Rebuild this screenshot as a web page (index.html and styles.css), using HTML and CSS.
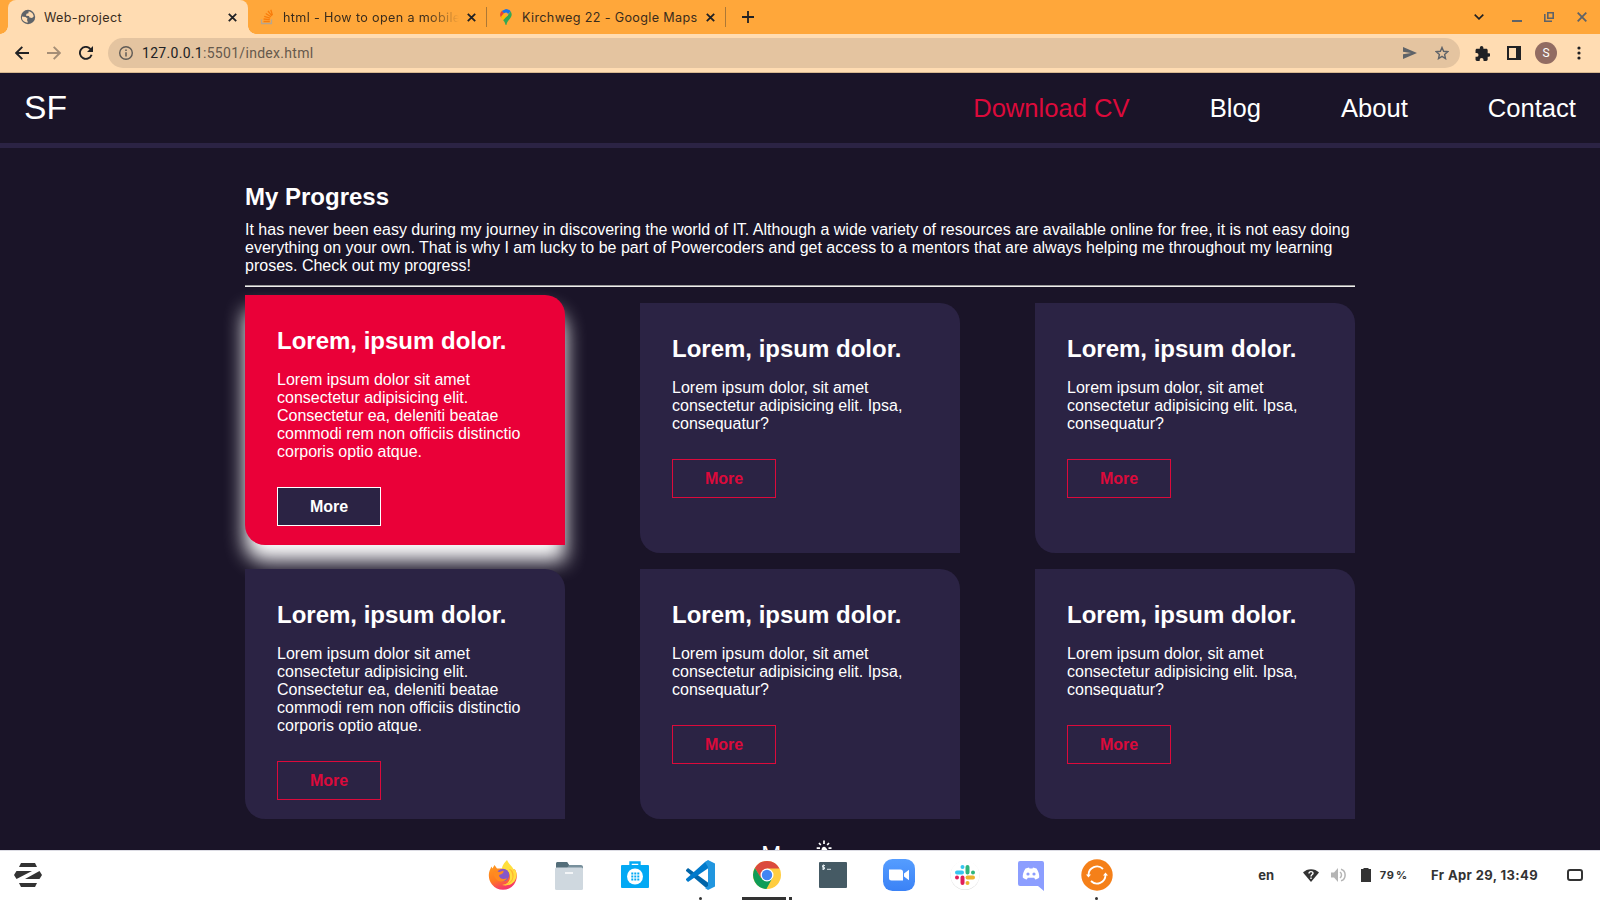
FILE: index.html
```html
<!DOCTYPE html>
<html lang="en">
<head>
<meta charset="utf-8">
<title>Web-project</title>
<link rel="stylesheet" href="styles.css">
</head>
<body>
<div class="screen">
  <div class="tabs">
    <div class="tab active">
      <svg class="fav" width="16" height="16" viewBox="0 0 16 16"><circle cx="8" cy="8" r="7.2" fill="#5f6368"/><path d="M2 7.500l3.500.5 2 1.500-.5 1.500 1 2.500C4 13.500 1.500 11 2 7.500zM8.500 2.500c3 0 5 2.500 5.200 5l-1.700 1.500-2.500-.5-.5-1.500-3-.3.5-2 2-.5z" fill="#ffdcb2"/></svg>
      <span class="label">Web-project</span>
      <svg class="x" width="9" height="9" viewBox="0 0 9 9"><path d="M.8.8l7.400 7.400M8.200.8L.8 8.200"/></svg>
    </div>
    <div class="tab second">
      <svg class="fav" width="16" height="16" viewBox="0 0 16 16"><path d="M2.500 10.500v4h10v-4" fill="none" stroke="#b8a58c" stroke-width="1.300"/><path d="M4.500 12.500h6.300M4.600 10l6.200.7M5.200 7.300l6 1.800M6.700 4.500l5.300 3.300M9 2l3.900 4.900M11.800.7l1.600 5.600" stroke="#f97c0b" stroke-width="1.300"/></svg>
      <span class="label fade">html - How to open a mobile</span>
      <svg class="x" width="9" height="9" viewBox="0 0 9 9"><path d="M.8.8l7.400 7.400M8.200.8L.8 8.200"/></svg>
    </div>
    <i class="sep"></i>
    <div class="tab third">
      <svg class="fav" width="16" height="16" viewBox="0 0 16 16"><path d="M8 0a5.700 5.700 0 0 1 4.700 2.500L8 7 3.700 2z" fill="#1a73e8"/><path d="M3.700 1.900L7 5 3.400 9A5.500 5.500 0 0 1 3.700 1.900z" fill="#ea4335"/><path d="M6 4l-3.200 4 2.400 3.200L10 6z" fill="#fbbc04"/><path d="M12.700 2.400c1.700 2.600 1.100 5-1.200 7.800C9.500 12.700 9 13 8.600 15.500c-.2.700-1 .7-1.200 0C7 13.500 6.500 12.500 5.200 11.200L10 6z" fill="#34a853"/><circle cx="8" cy="5.500" r="2" fill="#ffa73a"/></svg>
      <span class="label">Kirchweg 22 - Google Maps</span>
      <svg class="x" width="9" height="9" viewBox="0 0 9 9"><path d="M.8.8l7.400 7.400M8.200.8L.8 8.200"/></svg>
    </div>
    <i class="sep"></i>
    <svg class="plus" width="12" height="12" viewBox="0 0 12 12"><path d="M6 0v12M0 6h12" stroke="#202124" stroke-width="1.800"/></svg>
    <div class="window-buttons">
      <svg width="10" height="6" viewBox="0 0 10 6"><path d="M.7.6L5 4.900 9.300.6" fill="none" stroke="#202124" stroke-width="1.600"/></svg>
      <svg width="10" height="10" viewBox="0 0 10 10"><path d="M0 9h10" stroke="#5f6368" stroke-width="2"/></svg>
      <svg width="10" height="10" viewBox="0 0 10 10"><path d="M.8 2v7.200H8M3.800.8h5.400v5.400H3.800z" fill="none" stroke="#5f6368" stroke-width="1.600"/></svg>
      <svg width="10" height="10" viewBox="0 0 10 10"><path d="M.7.700l8.600 8.600M9.300.7L.7 9.300" stroke="#5f6368" stroke-width="1.800"/></svg>
    </div>
  </div>

  <div class="toolbar">
    <svg class="back" width="14" height="14" viewBox="0 0 14 14"><path d="M14 7H1.500M7.300.8L1.200 7l6.100 6.200" fill="none" stroke="#202124" stroke-width="1.900"/></svg>
    <svg class="forward" width="14" height="14" viewBox="0 0 14 14"><path d="M0 7h12.500M6.700.8L12.800 7l-6.100 6.200" fill="none" stroke="#a58e76" stroke-width="1.900"/></svg>
    <svg class="reload" width="14" height="14" viewBox="0 0 14 14"><path d="M12.600 8.800A6 6 0 1 1 11.300 2.800L13 4.500" fill="none" stroke="#202124" stroke-width="1.900"/><path d="M14 0v6H8z" fill="#202124"/></svg>
    <div class="omnibox">
      <svg class="info" width="14" height="14" viewBox="0 0 14 14"><circle cx="7" cy="7" r="6.300" fill="none" stroke="#5f5a55" stroke-width="1.400"/><path d="M7 6.200v4.300M7 3.400v1.500" stroke="#5f5a55" stroke-width="1.500"/></svg>
      <span class="url"><b>127.0.0.1</b>:5501/index.html</span>
      <svg class="send" width="14" height="12" viewBox="0 0 14 12"><path d="M0 0l14 6-14 6V7.300L8 6 0 4.700z" fill="#5f6368"/></svg>
      <svg class="star" width="14" height="14" viewBox="0 0 14 14"><path d="M7 1.500l1.600 3.800 4.100.4-3.100 2.700.9 4.200L7 10.400l-3.500 2.200.9-4.200L1.300 5.700l4.100-.4z" fill="none" stroke="#5f6368" stroke-width="1.400"/></svg>
    </div>
    <svg class="puzzle" width="15" height="15" viewBox="1.500 1 20.500 21"><path d="M20.500 11H19V7c0-1.100-.9-2-2-2h-4V3.500a2.500 2.500 0 0 0-5 0V5H4c-1.100 0-2 .9-2 2v3.800h1.500a2.700 2.700 0 0 1 0 5.400H2V20c0 1.100.9 2 2 2h3.800v-1.500a2.700 2.700 0 0 1 5.400 0V22H17c1.100 0 2-.9 2-2v-4h1.500a2.500 2.500 0 0 0 0-5z" fill="#202124"/></svg>
    <svg class="panel" width="14" height="14" viewBox="0 0 14 14"><path d="M0 0h14v14H0zM2 2v10h7V2z" fill="#202124" fill-rule="evenodd"/></svg>
    <span class="avatar">S</span>
    <svg class="dots" width="4" height="14" viewBox="0 0 4 14"><g fill="#202124"><circle cx="2" cy="2" r="1.600"/><circle cx="2" cy="7" r="1.600"/><circle cx="2" cy="12" r="1.600"/></g></svg>
  </div>

  <div class="page">
    <nav class="nav">
      <span class="logo">SF</span>
      <div class="links"><a class="cv">Download CV</a><a>Blog</a><a>About</a><a>Contact</a></div>
    </nav>
    <main class="content">
      <h2>My Progress</h2>
      <p class="intro">It has never been easy during my journey in discovering the world of IT. Although a wide variety of resources are available online for free, it is not easy doing everything on your own. That is why I am lucky to be part of Powercoders and get access to a mentors that are always helping me throughout my learning proses. Check out my progress!</p>
      <hr>
      <div class="cards">
        <article class="card hover"><h3>Lorem, ipsum dolor.</h3><p>Lorem ipsum dolor sit amet consectetur adipisicing elit. Consectetur ea, deleniti beatae commodi rem non officiis distinctio corporis optio atque.</p><a class="more">More</a></article>
        <article class="card"><h3>Lorem, ipsum dolor.</h3><p>Lorem ipsum dolor, sit amet consectetur adipisicing elit. Ipsa, consequatur?</p><a class="more">More</a></article>
        <article class="card"><h3>Lorem, ipsum dolor.</h3><p>Lorem ipsum dolor, sit amet consectetur adipisicing elit. Ipsa, consequatur?</p><a class="more">More</a></article>
        <article class="card"><h3>Lorem, ipsum dolor.</h3><p>Lorem ipsum dolor sit amet consectetur adipisicing elit. Consectetur ea, deleniti beatae commodi rem non officiis distinctio corporis optio atque.</p><a class="more">More</a></article>
        <article class="card"><h3>Lorem, ipsum dolor.</h3><p>Lorem ipsum dolor, sit amet consectetur adipisicing elit. Ipsa, consequatur?</p><a class="more">More</a></article>
        <article class="card"><h3>Lorem, ipsum dolor.</h3><p>Lorem ipsum dolor, sit amet consectetur adipisicing elit. Ipsa, consequatur?</p><a class="more">More</a></article>
      </div>
      <div class="show-more"><span>More</span>
        <svg width="24" height="24" viewBox="0 0 24 24"><path d="M8 .5V4M3 3l1.800 2M13 3l-1.800 2M.7 8.200H4M12.500 8.200h3" stroke="#fff" stroke-width="1.700"/><path d="M5.500 10c0-2 1-3.300 2.500-3.300s2.500 1.300 3.500 3.300l5 4 3 3v7H9l-5-7 2-1z" fill="#fff"/></svg>
      </div>
    </main>
  </div>

  <div class="taskbar">
    <svg class="zorin" width="28" height="24" viewBox="0 0 28 24"><g fill="#333"><path d="M7 0h14l2 4H5zM5 20h18l-2 4H7zM2.500 8H18L2.500 16 0 12zM25.500 8L28 12l-2.500 4H11z"/></g></svg>
    <div class="dock">
      <span class="app"><svg width="32" height="32" viewBox="0 0 32 32"><defs><linearGradient id="ff" x1="0" y1="0" x2=".4" y2="1"><stop offset="0" stop-color="#ff9c20"/><stop offset=".6" stop-color="#ff7a20"/><stop offset="1" stop-color="#f5376a"/></linearGradient></defs><path d="M2 14c.6-3 1.600-4 2.200-6.500l1.300 2L7.500 6l2.500 3.500h6l12 1c3 5 2 11-1 15a14 14 0 0 1-22 0C2 22 1.500 18 2 14z" fill="url(#ff)"/><path d="M20 1c-4 4-5 7-5 9 4 0 8 3 8 8 0 4-3 8-8 8 8 2 14.500-3 14.500-10 0-3-1-5-2.500-6v2c-1-5-5-6-7-11z" fill="#ffdf3d"/><path d="M25 20c1-3 0-8-3-10 3 0 6 4 4 10-1 3-4 6-11 6 5-1 8-2 10-6z" fill="#ffb52e"/><circle cx="16" cy="16" r="6.300" fill="#8657c8"/><path d="M7 12l5.500 1 4-1.500c.5 2-1 3.500-4.500 4.500 0 4 5 5 8 3-2 5-10 5-13-2z" fill="#ff8a20"/></svg></span>
      <span class="app"><svg width="32" height="32" viewBox="0 0 32 32"><path d="M3 5c0-1 .5-2 1.500-2H14l2 3h12c1 0 2 .8 2 2v4H3z" fill="#78909c"/><path d="M3 5c0-1 .5-2 1.500-2H14l2 3-2 3H3z" fill="#546e7a"/><rect x="2" y="8.500" width="28" height="22.500" rx="1.500" fill="#cfd8df"/><path d="M12 14h8" stroke="#fff" stroke-width="1.500"/></svg></span>
      <span class="app"><svg width="32" height="32" viewBox="0 0 32 32"><path d="M11.500 7V3.500h9V7" fill="none" stroke="#03a9f4" stroke-width="2.400"/><rect x="2" y="6" width="28" height="23" rx="1" fill="#03a9f4"/><circle cx="16" cy="17.500" r="8" fill="#fff"/><path d="M12.300 14.500h8M12.300 17.500h8M12.300 20.500h8" stroke="#03a9f4" stroke-width="1.800" stroke-dasharray="2 1"/></svg></span>
      <span class="app dot"><svg width="32" height="32" viewBox="0 0 32 32"><path d="M1 11l2-2 22 16-2 5-3-2L1 12z" fill="#0065a9"/><path d="M1 21l2 2L25 8l-2-6-3 1L1 20z" fill="#007acc"/><path d="M23 1l7 3.500v23L23 31l-3-2 3-2V8l-3-5z" fill="#2196df"/></svg></span>
      <span class="app current"><svg width="32" height="32" viewBox="0 0 32 32"><circle cx="16" cy="16" r="14" fill="#ffcd40"/><path d="M16 16l-6 3.500L3.900 9A14 14 0 0 1 28.500 9.500H16z" fill="#db4a3d"/><path d="M3.900 9A14 14 0 0 0 15.400 30l6-11L10 19z" fill="#0f9d58"/><circle cx="16" cy="16" r="6.500" fill="#fff"/><circle cx="16" cy="16" r="5.200" fill="#4285f4"/></svg></span>
      <span class="app"><svg width="32" height="32" viewBox="0 0 32 32"><rect x="2" y="3" width="28" height="26" rx="1" fill="#455a64"/><path d="M8 6.500H5.500v1.800H7.500v1.700H5M6.500 5.500V11M10 10.300h4" fill="none" stroke="#dce5e9" stroke-width="1"/></svg></span>
      <span class="app"><svg width="32" height="32" viewBox="0 0 32 32"><defs><linearGradient id="zm" x1="0" y1="0" x2="0" y2="1"><stop offset="0" stop-color="#559dff"/><stop offset="1" stop-color="#3b82f6"/></linearGradient></defs><rect width="32" height="32" rx="9.500" fill="url(#zm)"/><path d="M6 10.500h11.500A2.500 2.500 0 0 1 20 13v8.500H8.500A2.500 2.500 0 0 1 6 19zM21 14.500l5-3.800v10.600l-5-3.800z" fill="#fff"/></svg></span>
      <span class="app"><svg width="32" height="32" viewBox="0 0 32 32"><circle cx="16" cy="16.600" r="14.500" fill="#d9d9d9"/><circle cx="16" cy="16" r="14.500" fill="#fff"/><g stroke-width="4" stroke-linecap="round"><path d="M8 13.500h5M13.500 8v0" stroke="#36c5f0"/><path d="M18.500 8v5.500M24 13.500v0" stroke="#2eb67d"/><path d="M18.500 18.500H24M18.500 24v0" stroke="#ecb22e"/><path d="M13.500 18.500V24M8 18.500v0" stroke="#e01e5a"/></g></svg></span>
      <span class="app"><svg width="32" height="32" viewBox="0 0 32 32"><path d="M5 2h22a2 2 0 0 1 2 2v28l-6-5H5a2 2 0 0 1-2-2V4a2 2 0 0 1 2-2z" fill="#8c9eff"/><path d="M10.500 9.500L14 8.500l.5 1h3l.5-1 3.500 1c2 3 3 6 2.700 9-1 1-2.500 1.700-4 2l-1-1.700h-6.400l-1 1.700c-1.500-.3-3-1-4-2-.3-3 .7-6 2.700-9z" fill="#fff"/><circle cx="13" cy="15" r="1.600" fill="#8c9eff"/><circle cx="19" cy="15" r="1.600" fill="#8c9eff"/></svg></span>
      <span class="app dot"><svg width="32" height="32" viewBox="0 0 32 32"><circle cx="16" cy="16" r="15.700" fill="#f58019"/><path d="M7.500 16A8.500 8.500 0 0 1 22 10M24.500 16A8.500 8.500 0 0 1 10 22" fill="none" stroke="#fff" stroke-width="1.800"/><path d="M5 15.500h5L7.500 18.500zM22 16.500h5L24.500 13.500z" fill="#fff"/></svg></span>
    </div>
    <div class="tray">
      <span class="lang">en</span>
      <svg class="wifi" width="16" height="13" viewBox="0 0 16 13"><path d="M0 3.500C4-1 12-1 16 3.500L8 13z" fill="#333"/><path d="M6 4.500c0-2.500 4-2.500 4-.3C10 5.500 8 5.500 8 7.500M8 8.500V10" fill="none" stroke="#fff" stroke-width="1.400"/></svg>
      <svg class="sound" width="16" height="14" viewBox="0 0 16 14"><path d="M0 4.500h3L7 0v14L3 9.500H0z" fill="#b5b5b5"/><path d="M9 4c2 1.500 2 4.500 0 6M10 1.200c5.500 1.500 5.500 10.100 0 11.600" fill="none" stroke="#b5b5b5" stroke-width="1.500"/></svg>
      <svg class="battery" width="10" height="14" viewBox="0 0 10 14"><path d="M2.500 0h5v1H10v13H0V1h2.500z" fill="#333"/></svg>
      <span class="pct">79 %</span>
      <span class="clock">Fr Apr 29, 13:49</span>
      <svg class="desk" width="16" height="12" viewBox="0 0 16 12"><rect x="1" y="1" width="14" height="10" rx="2" fill="none" stroke="#333" stroke-width="2"/></svg>
    </div>
  </div>
</div>
</body>
</html>
```
FILE: styles.css
```css
* { box-sizing: border-box; margin: 0; padding: 0; }
body { width: 1600px; height: 900px; overflow: hidden; background: #1a1428; }
svg { display: block; flex: none; }
.screen { display: flex; flex-direction: column; width: 1600px; height: 900px; }

/* browser chrome */
.tabs { display: flex; align-items: center; flex: none; height: 34px; padding-left: 8px; background: #ffa73a; font: 12.6px Inter, sans-serif; color: #3a2c1c; letter-spacing: .35px; }
.tab { position: relative; display: flex; align-items: center; height: 34px; }
.tab .label { margin-left: 8px; padding-top: 1px; flex: 1; line-height: 18px; white-space: nowrap; overflow: hidden; }
.tab.active { width: 240px; padding: 0 12px 0 12px; background: #ffdcb2; border-radius: 8px 8px 0 0; }
.tab.active .x { margin-right: -.5px; }
.tab.active::before, .tab.active::after { content: ""; position: absolute; bottom: 0; width: 8px; height: 8px; }
.tab.active::before { left: -8px; background: radial-gradient(circle at 0 0, transparent 7.5px, #ffdcb2 8px); }
.tab.active::after { right: -8px; background: radial-gradient(circle at 100% 0, transparent 7.5px, #ffdcb2 8px); }
.tab.second { width: 238px; padding: 0 10.5px 0 11px; }
.tab.second .x { margin-left: 8px; }
.tab.third { width: 238px; padding: 0 10.5px 0 11px; }
.x { fill: none; stroke: #202124; stroke-width: 1.8; }
.fade { -webkit-mask-image: linear-gradient(90deg, #000 82%, transparent); mask-image: linear-gradient(90deg, #000 82%, transparent); }
.sep { width: 1px; height: 20px; background: #ad7835; }
.plus { margin-left: 16px; }
.window-buttons { display: flex; align-items: center; gap: 23px; margin-left: auto; padding-right: 13px; }
.window-buttons svg:first-child { margin-right: 4px; }
.window-buttons svg:nth-child(2) { margin: 0 -1px 0 1px; }

.toolbar { display: flex; align-items: center; flex: none; height: 39px; padding-left: 15px; background: #ffdcb2; border-bottom: 1px solid #d6b78f; font-family: Roboto, sans-serif; }
.forward { margin-left: 18px; }
.reload { margin-left: 18px; }
.omnibox { display: flex; align-items: center; width: 1352px; height: 30px; margin-left: 15px; padding: 0 11px; border-radius: 15px; background: #e4c4a0; }
.url { margin-left: 9px; flex: 1; font: 14px Roboto, sans-serif; color: #66594c; letter-spacing: .3px; }
.url b { font-weight: 400; color: #202124; }
.star { margin-left: 18px; }
.puzzle { margin-left: 14.5px; }
.panel { margin-left: 17.5px; }
.avatar { width: 22px; height: 22px; margin-left: 14px; border-radius: 50%; background: #926c62; color: #fff; font-size: 12px; line-height: 22px; text-align: center; }
.dots { margin-left: 19.5px; }

/* web page */
.page { flex: none; height: 777px; overflow: hidden; background: #1a1428; color: #fff; font: 16px/18px "Liberation Sans", Arial, sans-serif; }
.nav { display: flex; align-items: center; justify-content: space-between; height: 75px; padding: 0 24px; border-bottom: 5px solid #2b2344; }
.logo { padding-bottom: 1px; font-size: 33.6px; line-height: 37px; }
.links { display: flex; gap: 80px; font-size: 25.6px; line-height: 29px; }
.cv { color: #dc0a3b; }
.content { width: 1110px; margin: 0 auto; padding-top: 35px; }
h2 { font-size: 24px; line-height: 27px; }
.intro { margin-top: 11px; }
hr { height: 2px; margin-top: 10px; border: 0; border-top: 1px solid #9a9a9a; border-bottom: 1px solid #eee; }
.cards { display: grid; grid-template-columns: repeat(3, 320px); justify-content: space-between; gap: 16px 0; margin-top: 16px; }
.card { height: 250px; padding: 32px; background: #2b2344; border-radius: 0 20px 0 20px; }
.card h3 { font-size: 24px; line-height: 27px; }
.card p { margin: 17px 0 26px; }
.more { display: block; width: 104px; height: 39px; border: 1px solid #dc0a3b; color: #dc0a3b; font-weight: 700; line-height: 37px; text-align: center; }
.card.hover { margin-top: -8px; background: #ea0038; box-shadow: 0 16px 20px #fff; }
.hover .more { border-color: #fff; background: #2b2344; color: #fff; }
.card:not(.hover) { position: relative; }
.show-more { display: flex; justify-content: center; margin-top: 21px; padding-left: 1px; font-size: 24px; line-height: 29px; }

/* desktop panel */
.taskbar { display: grid; grid-template-columns: 1fr auto 1fr; align-items: center; flex: none; height: 50px; padding-bottom: 1px; border-top: 1px solid #dcdce4; background: #fff; color: #333; font-family: Inter, sans-serif; font-weight: 700; }
.zorin { margin-left: 14px; }
.dock { display: flex; gap: 34px; }
.app { position: relative; display: block; }
.dot::after { content: ""; position: absolute; left: 14px; bottom: -9px; width: 3px; height: 3px; border-radius: 50%; background: #333; }
.current::before { content: ""; position: absolute; left: -9px; bottom: -9px; width: 44px; height: 3px; background: #333; }
.current::after { content: ""; position: absolute; left: 38px; bottom: -9px; width: 3px; height: 3px; background: #333; }
.tray { display: flex; align-items: center; justify-content: flex-end; padding-right: 17px; font-size: 13px; line-height: 16px; white-space: nowrap; }
.tray .lang, .tray .clock { padding-bottom: 1px; }
.wifi { margin-left: 29px; }
.sound { margin-left: 12px; }
.battery { margin-left: 14px; }
.pct { margin-left: 8.5px; font-size: 11px; letter-spacing: .8px; word-spacing: -2px; }
.clock { margin-left: 23px; letter-spacing: .38px; }
.desk { margin-left: 29px; }
```
